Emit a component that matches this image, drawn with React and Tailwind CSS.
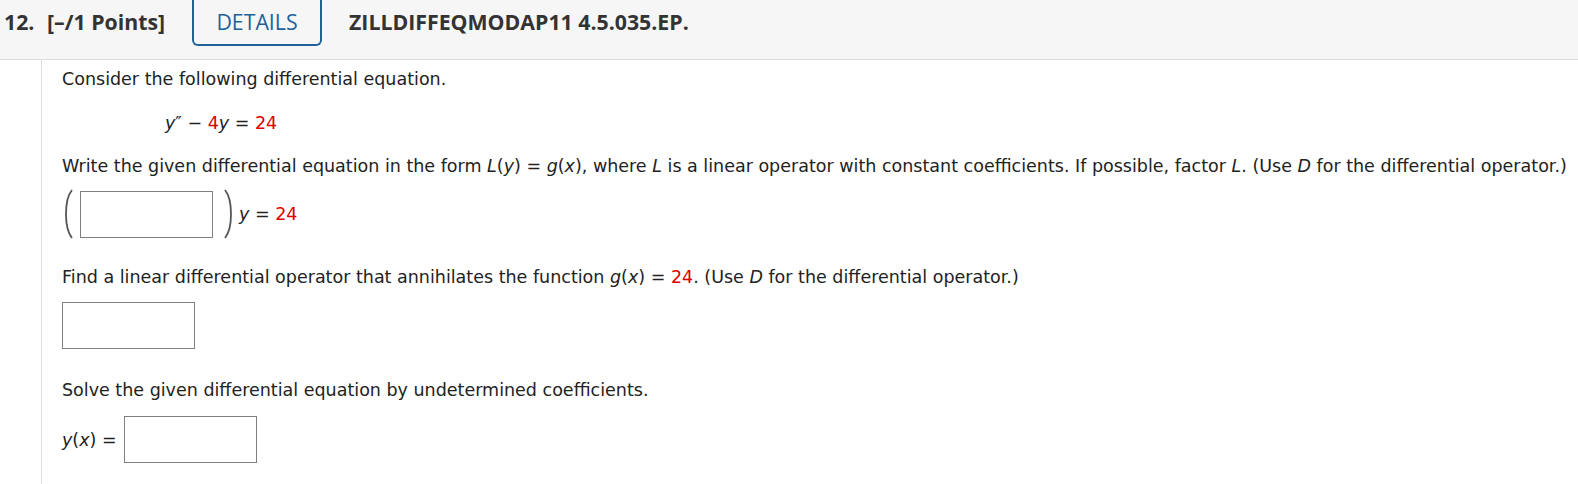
import React from "react";

const red = "text-[#e00000]";

const Paren = ({ flip }) => (
    <svg width="12" height="52" viewBox="0 0 12 52" className={flip ? "-scale-x-100" : ""}>
        <path d="M10 2 C 2 12, 2 40, 10 50" stroke="#555" strokeWidth="1.8" fill="none" />
    </svg>
);

const Box = ({ className = "" }) => (
    <div className={"h-[47px] w-[133px] border border-[#808080] bg-white " + className}></div>
);

const I = ({ children }) => <i className="italic">{children}</i>;

export default function App() {
    return (
        <div className="w-[1578px] h-[484px] bg-white overflow-hidden">
            {/* header */}
            <div className="h-[60px] bg-[#f6f6f6] border-b border-[#dddddd] flex items-start font-['Open_Sans',sans-serif] text-[#333] text-[21.3px] leading-[28px]">
                <div className="pl-[4px] pt-[8px] font-bold w-[47px]">12.</div>
                <div className="pt-[8px] font-bold w-[145px]">[–/1 Points]</div>
                <div className="w-[130px] h-[46px] border-2 border-t-0 border-[#1f6198] rounded-b-[6px] flex items-center justify-center text-[#1f6198] font-medium pb-[1px]">
                    DETAILS
                </div>
                <div className="pl-[27px] pt-[8px] font-bold">ZILLDIFFEQMODAP11 4.5.035.EP.</div>
            </div>

            {/* body */}
            <div className="ml-[41px] border-l border-[#dddddd] h-[424px] pl-[20px] pt-[7px] font-['DejaVu_Sans',Verdana,sans-serif] text-[17.5px] text-[#222] leading-[24px] whitespace-nowrap">
                <p>Consider the following differential equation.</p>

                <p className="mt-[20px] pl-[103px]">
                    <I>y</I>″ − <span className={red}>4</span><I>y</I> = <span className={red}>24</span>
                </p>

                <p className="mt-[19px]">
                    Write the given differential equation in the form <I>L</I>(<I>y</I>) = <I>g</I>(<I>x</I>), where <I>L</I> is a linear operator with constant coefficients. If possible, factor <I>L</I>. (Use <I>D</I> for the differential operator.)
                </p>

                <div className="mt-[10px] flex items-center">
                    <Paren />
                    <Box className="ml-[6px] mr-[10px]" />
                    <Paren flip />
                    <span className="ml-[4px]"><I>y</I> = <span className={red}>24</span></span>
                </div>

                <p className="mt-[25px]">
                    Find a linear differential operator that annihilates the function <I>g</I>(<I>x</I>) = <span className={red}>24</span>. (Use <I>D</I> for the differential operator.)
                </p>

                <Box className="mt-[13px]" />

                <p className="mt-[29px]">Solve the given differential equation by undetermined coefficients.</p>

                <div className="mt-[14px] flex items-center">
                    <span className="w-[62px]"><I>y</I>(<I>x</I>) =</span>
                    <Box />
                </div>
            </div>
        </div>
    );
}
